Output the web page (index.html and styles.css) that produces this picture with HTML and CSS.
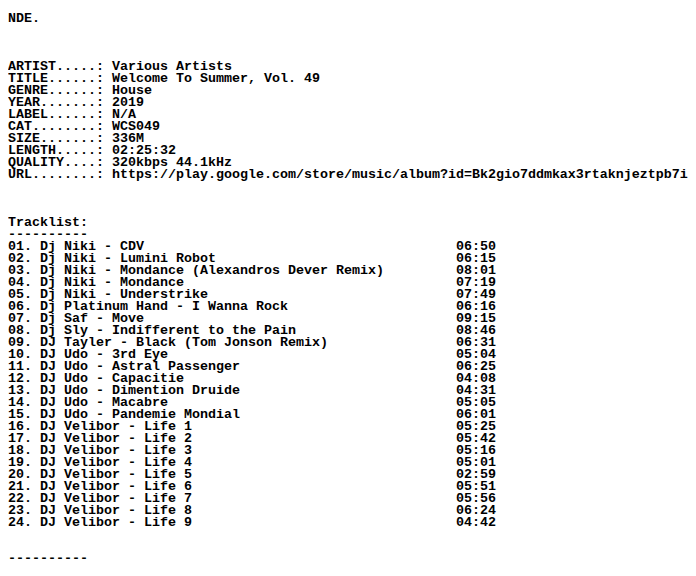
FILE: index.html
```html
<!DOCTYPE html>
<html>
<head>
<meta charset="utf-8">
<link rel="stylesheet" href="styles.css">
</head>
<body class="page">
<pre class="nfo">NDE.



ARTIST.....: Various Artists
TITLE......: Welcome To Summer, Vol. 49
GENRE......: House
YEAR.......: 2019
LABEL......: N/A
CAT........: WCS049
SIZE.......: 336M
LENGTH.....: 02:25:32
QUALITY....: 320kbps 44.1kHz
URL........: https://play.google.com/store/music/album?id=Bk2gio7ddmkax3rtaknjeztpb7i



Tracklist:
----------
01. Dj Niki - CDV                                       06:50
02. Dj Niki - Lumini Robot                              06:15
03. Dj Niki - Mondance (Alexandros Dever Remix)         08:01
04. Dj Niki - Mondance                                  07:19
05. Dj Niki - Understrike                               07:49
06. Dj Platinum Hand - I Wanna Rock                     06:16
07. Dj Saf - Move                                       09:15
08. Dj Sly - Indifferent to the Pain                    08:46
09. DJ Tayler - Black (Tom Jonson Remix)                06:31
10. DJ Udo - 3rd Eye                                    05:04
11. DJ Udo - Astral Passenger                           06:25
12. DJ Udo - Capacitie                                  04:08
13. DJ Udo - Dimention Druide                           04:31
14. DJ Udo - Macabre                                    05:05
15. DJ Udo - Pandemie Mondial                           06:01
16. DJ Velibor - Life 1                                 05:25
17. DJ Velibor - Life 2                                 05:42
18. DJ Velibor - Life 3                                 05:16
19. DJ Velibor - Life 4                                 05:01
20. DJ Velibor - Life 5                                 02:59
21. DJ Velibor - Life 6                                 05:51
22. DJ Velibor - Life 7                                 05:56
23. DJ Velibor - Life 8                                 06:24
24. DJ Velibor - Life 9                                 04:42


----------</pre>
</body>
</html>
```
FILE: styles.css
```css
html, body {
  background: #ffffff;
}
.page {
  margin: 8px;
}
.nfo {
  margin: 0;
  padding-top: 5px;
  font-family: "Liberation Mono", "DejaVu Sans Mono", monospace;
  font-weight: bold;
  font-size: 13.333px;
  line-height: 12px;
  color: #000000;
  white-space: pre;
}
```
